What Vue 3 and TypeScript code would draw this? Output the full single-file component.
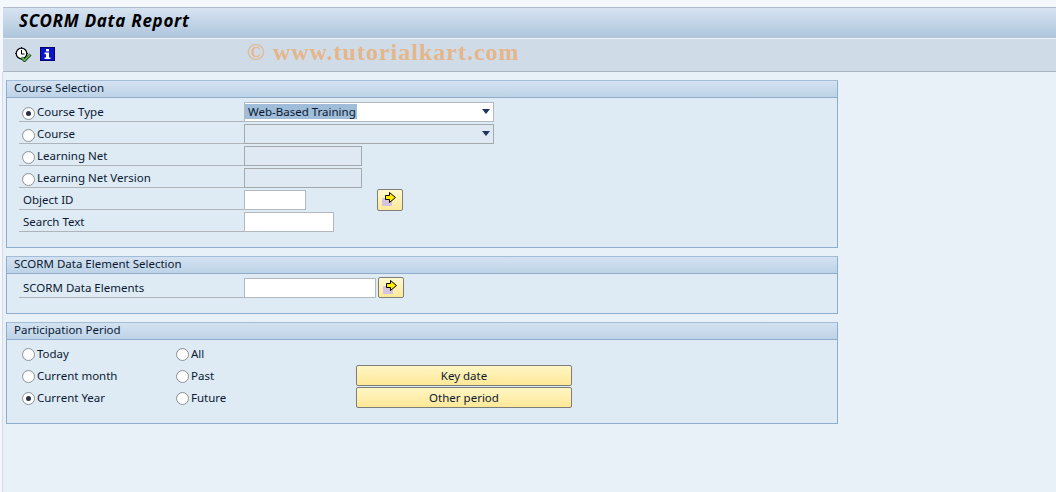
<script setup lang="ts">
interface FormRow {
  label: string
  radio?: boolean
  checked?: boolean
}

const courseRows: FormRow[] = [
  { label: 'Course Type', radio: true, checked: true },
  { label: 'Course', radio: true },
  { label: 'Learning Net', radio: true },
  { label: 'Learning Net Version', radio: true },
  { label: 'Object ID' },
  { label: 'Search Text' },
]

const periods = [
  { left: 'Today', right: 'All', checked: false },
  { left: 'Current month', right: 'Past', checked: false },
  { left: 'Current Year', right: 'Future', checked: true },
]
</script>

<template>
  <div class="page">
    <div class="topband"></div>
    <div class="titlebar">SCORM Data Report</div>
    <div class="toolbar">
      <svg class="icon" width="17" height="15" viewBox="0 0 17 15">
        <path d="M0 6.5H1.5M6.5 0V1.5M13 6.5H11.5M6.5 13V11.5" stroke="#000" stroke-width="1" />
        <circle cx="6.5" cy="6.5" r="5.3" fill="#fff" stroke="#000" stroke-width="1.2" />
        <path d="M6.5 3V7H9.5" fill="none" stroke="#000" stroke-width="1" />
        <path d="M6.5 10.5L9.5 13.5 15.5 7.5" fill="none" stroke="#1d4d17" stroke-width="3" />
        <path d="M6.8 10.5L9.5 13.2 15.2 7.5" fill="none" stroke="#6fc060" stroke-width="1.4" />
      </svg>
      <svg class="icon" width="15" height="14" viewBox="0 0 15 14">
        <rect x="0" y="0" width="15" height="14" fill="#0a14c8" />
        <rect x="0.5" y="0.5" width="14" height="13" fill="none" stroke="#00006e" />
        <rect x="6" y="2" width="3" height="2.4" fill="#fff" />
        <path d="M4.5 5.6H9V10.4H10.5V12H4.5V10.4H6V7.2H4.5Z" fill="#fff" />
      </svg>
      <div class="watermark">© www.tutorialkart.com</div>
    </div>

    <div class="content">
      <section class="group course">
        <header>Course Selection</header>
        <div class="rows">
          <div v-for="row in courseRows" :key="row.label" class="row">
            <div class="label" :class="{ plain: !row.radio }">
              <span v-if="row.radio" class="radio" :class="{ on: row.checked }"></span>
              <span class="caption">{{ row.label }}</span>
            </div>
            <template v-if="row.label === 'Course Type'">
              <div class="field select"><span class="selected">Web-Based Training</span><i class="caret"></i></div>
            </template>
            <template v-else-if="row.label === 'Course'">
              <div class="field select off"><i class="caret"></i></div>
            </template>
            <div v-else-if="row.radio" class="field off net"></div>
            <template v-else-if="row.label === 'Object ID'">
              <div class="field objid"></div>
              <button class="more object-more">
                <svg width="24" height="20" viewBox="0 0 24 20">
                  <rect x="4" y="8" width="10" height="8" fill="#d4c4e0" />
                  <path d="M7.5 5.5H11.5V2.5L17.5 7.5 11.5 12.5V9.5H7.5Z" fill="#ffec00" stroke="#000" stroke-width="1" />
                </svg>
              </button>
            </template>
            <div v-else class="field search"></div>
          </div>
        </div>
      </section>

      <section class="group element">
        <header>SCORM Data Element Selection</header>
        <div class="rows">
          <div class="row">
            <div class="label plain"><span class="caption">SCORM Data Elements</span></div>
            <div class="field elements"></div>
            <button class="more element-more">
              <svg width="24" height="19" viewBox="0 0 24 19">
                <rect x="4" y="8" width="10" height="8" fill="#d4c4e0" />
                <path d="M7.5 5.5H11.5V2.5L17.5 7.5 11.5 12.5V9.5H7.5Z" fill="#ffec00" stroke="#000" stroke-width="1" />
              </svg>
            </button>
          </div>
        </div>
      </section>

      <section class="group period">
        <header>Participation Period</header>
        <div class="period-body">
          <div class="period-rows">
            <div v-for="p in periods" :key="p.left" class="period-row">
              <div class="period-left"><span class="radio" :class="{ on: p.checked }"></span><span class="period-text">{{ p.left }}</span></div>
              <div class="period-right"><span class="radio"></span><span class="period-text">{{ p.right }}</span></div>
            </div>
          </div>
          <div class="period-btns">
            <button class="wide">Key date</button>
            <button class="wide">Other period</button>
          </div>
        </div>
      </section>
    </div>
  </div>
</template>

<style>
html, body { margin: 0; background: #f4f7fb; }
</style>

<style scoped>
.page {
  width: 1056px;
  height: 492px;
  overflow: hidden;
  box-sizing: border-box;
  font-family: "Noto Sans", Tahoma, sans-serif;
  font-size: 11.5px;
  color: #0b1a33;
  background: #f4f7fb;
}
.topband { height: 7px; margin-left: 3px; border-bottom: 1px solid #b4bccb; }
.titlebar {
  height: 30px;
  margin-left: 3px;
  padding-left: 16px;
  box-sizing: border-box;
  background: linear-gradient(#d6e3f1, #aec5dc);
  font-size: 17px;
  font-weight: bold;
  font-style: italic;
  letter-spacing: 0.7px;
  line-height: 25px;
  color: #000;
}
.toolbar {
  position: relative;
  height: 34px;
  margin-left: 3px;
  padding-left: 12px;
  box-sizing: border-box;
  display: flex;
  align-items: center;
  gap: 8px;
  background: #cfdce8;
  border-top: 1px solid #eef3f9;
  border-bottom: 1px solid #a9b4c0;
}
.icon { display: block; margin-top: -2px; }
.watermark {
  position: absolute;
  left: 244px;
  top: -1px;
  font-family: "Liberation Serif", serif;
  font-size: 24px;
  font-weight: bold;
  letter-spacing: 1px;
  line-height: 28px;
  color: #e5b68a;
}
.content {
  margin-left: 2px;
  height: 420px;
  padding: 8px 0 0 3px;
  box-sizing: border-box;
  background: #e8f0f8;
  border-left: 1px solid #d4dbea;
}
.group {
  width: 832px;
  box-sizing: border-box;
  margin-bottom: 8px;
  border: 1px solid #8eadcd;
  border-top-color: #a3bdd7;
  background: #deeaf4;
}
.group header {
  height: 17px;
  padding-left: 7px;
  box-sizing: border-box;
  line-height: 14px;
  background: linear-gradient(#d3e2f1, #bed3e8);
  border-bottom: 1px solid #8eadcd;
  color: #0b1a33;
}
.course { height: 168px; }
.element { height: 58px; }
.period { height: 102px; }
.rows { padding: 2px 0 0 12px; }
.row {
  display: flex;
  height: 22px;
  align-items: flex-end;
}
.label {
  width: 225px;
  height: 22px;
  box-sizing: border-box;
  display: flex;
  align-items: center;
  gap: 2px;
  padding: 5px 0 0 3px;
  border-bottom: 1px solid #aeb4ba;
  flex: none;
}
.label.plain { padding-left: 4px; }
.caption { margin-top: -4px; }
.radio {
  width: 13px;
  height: 13px;
  flex: none;
  box-sizing: border-box;
  border: 1px solid #8f9499;
  border-radius: 50%;
  background: radial-gradient(circle at 60% 60%, #fff 55%, #e3e6ea);
  display: flex;
  align-items: center;
  justify-content: center;
}
.radio.on::after {
  content: "";
  width: 5px;
  height: 5px;
  border-radius: 50%;
  background: #2b3140;
}
.field {
  height: 20px;
  box-sizing: border-box;
  border: 1px solid #b3b9bf;
  background: #fff;
  display: flex;
  align-items: center;
  padding-bottom: 1px;
  flex: none;
}
.field.off { background: #dfe9f3; border-color: #a4a9ae; }
.select { width: 250px; }
.net { width: 118px; }
.objid { width: 62px; }
.search { width: 90px; }
.elements { width: 132px; }
.selected { background: #9fbcd9; padding: 0 1px 0 3px; line-height: 15px; margin-top: -1px; }
.caret {
  width: 0;
  height: 0;
  margin-left: auto;
  margin-right: 3px;
  border-left: 4.5px solid transparent;
  border-right: 4.5px solid transparent;
  border-top: 5px solid #1e3560;
}
.more {
  width: 26px;
  height: 22px;
  padding: 0;
  box-sizing: border-box;
  border: 1px solid #7d7d7a;
  border-radius: 2px;
  background: linear-gradient(#fff9cf, #ffe99a);
  display: flex;
  align-items: center;
  justify-content: center;
  flex: none;
}
.object-more { margin-left: 71px; margin-bottom: -1px; }
.element-more { margin-left: 2px; height: 21px; }
.period-body { display: flex; }
.period-rows { width: 349px; flex: none; padding-top: 3px; }
.period-row { display: flex; height: 22px; align-items: center; padding-left: 15px; }
.period-left { width: 154px; display: flex; gap: 2px; align-items: center; }
.period-right { display: flex; gap: 2px; align-items: center; }
.period-text { margin-top: -2px; }
.period-btns {
  display: flex;
  flex-direction: column;
  gap: 1px;
  padding-top: 25px;
}
.wide {
  width: 216px;
  height: 21px;
  padding: 0;
  box-sizing: border-box;
  border: 1px solid #7d7d7a;
  border-radius: 2px;
  background: linear-gradient(#fff6c4, #ffe898);
  font: inherit;
  color: #0b1a33;
}
</style>
